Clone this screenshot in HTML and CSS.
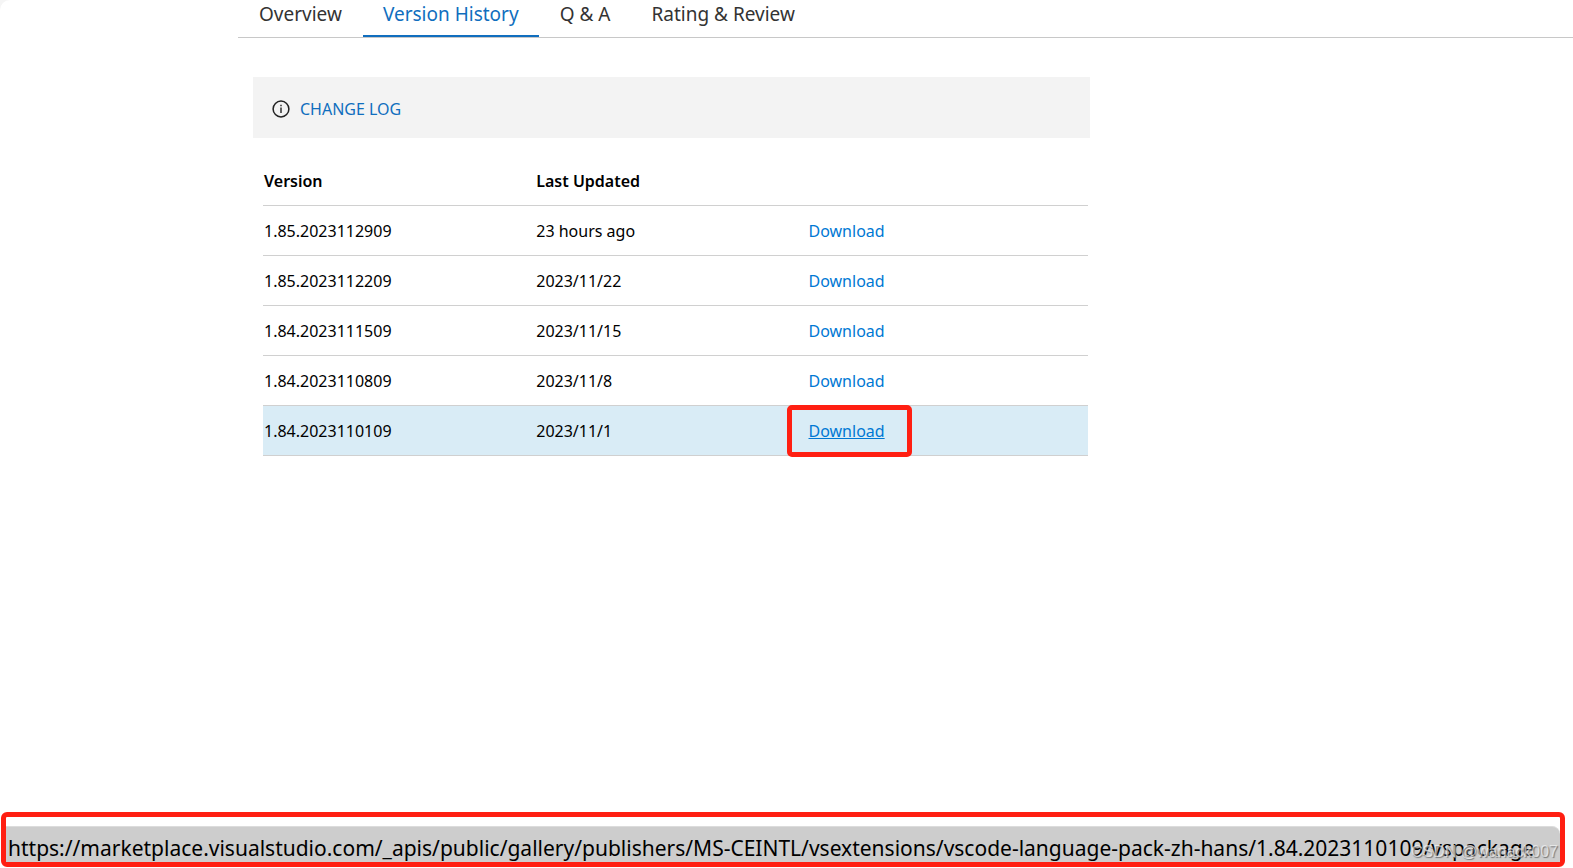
FILE: index.html
```html
<!DOCTYPE html>
<html lang="en">
<head>
<meta charset="utf-8">
<title>Version History</title>
<link rel="stylesheet" href="styles.css">
</head>
<body>
<div class="page">
  <nav class="tabs">
    <a class="tab" href="#overview">Overview</a>
    <a class="tab tab-active" href="#versions">Version History</a>
    <a class="tab" href="#qna">Q &amp; A</a>
    <a class="tab" href="#reviews">Rating &amp; Review</a>
  </nav>
  <main class="content">
    <div class="notice">
      <svg class="info" viewBox="0 0 18 18" aria-hidden="true"><circle cx="9" cy="9" r="7.9" fill="none" stroke="#222" stroke-width="1.5"/><path d="M9 7.5V13M9 4.8V6.2" stroke="#222" stroke-width="1.4"/></svg>
      <a class="link" href="#changelog">CHANGE LOG</a>
    </div>
    <table class="versions">
      <thead><tr><th>Version</th><th>Last Updated</th><th></th></tr></thead>
      <tbody>
        <tr><td>1.85.2023112909</td><td>23 hours ago</td><td><a class="download" href="#d1">Download</a></td></tr>
        <tr><td>1.85.2023112209</td><td>2023/11/22</td><td><a class="download" href="#d2">Download</a></td></tr>
        <tr><td>1.84.2023111509</td><td>2023/11/15</td><td><a class="download" href="#d3">Download</a></td></tr>
        <tr><td>1.84.2023110809</td><td>2023/11/8</td><td><a class="download" href="#d4">Download</a></td></tr>
        <tr class="current"><td>1.84.2023110109</td><td>2023/11/1</td><td><a class="download marked" href="#d5">Download</a></td></tr>
      </tbody>
    </table>
  </main>
  <footer class="status">
    <div class="status-url">https://marketplace.visualstudio.com/_apis/public/gallery/publishers/MS-CEINTL/vsextensions/vscode-language-pack-zh-hans/1.84.2023110109/vspackage</div>
    <span class="watermark">CSDN @wanack007</span>
  </footer>
</div>
</body>
</html>
```
FILE: styles.css
```css
* { box-sizing: border-box; }
body {
  margin: 0;
  background: #fff;
  color: #000;
  font-family: "Noto Sans", "Open Sans", sans-serif;
  font-size: 16px;
  line-height: 24px;
}
.page {
  display: flex;
  flex-direction: column;
  min-height: 100vh;
  border-top-left-radius: 10px;
  box-shadow: 0 0 0 8px #f5f5f5;
  overflow: hidden;
}
a { color: #106ebe; text-decoration: none; }
.tabs {
  display: flex;
  gap: 1px;
  height: 38px;
  margin-left: 238px;
  padding-left: 1px;
  border-bottom: 1px solid #c8c8c8;
  font-size: 19px;
  line-height: 28px;
}
.tab { padding: 0 20px; color: #333; white-space: nowrap; }
.tab-active { color: #106ebe; border-bottom: 2px solid #106ebe; }
.content {
  flex: 1;
  max-width: 1090px;
  padding: 39px 0 0 253px;
}
.notice {
  display: flex;
  align-items: center;
  gap: 10px;
  height: 61px;
  padding: 3px 19px 0;
  background: #f3f3f3;
}
.info { width: 18px; height: 18px; }
.versions {
  width: calc(100% - 12px);
  margin: 17px 2px 0 10px;
  table-layout: fixed;
  border-collapse: collapse;
}
.versions th, .versions td {
  height: 50px;
  padding: 2px 1px 0;
  border-bottom: 1px solid #d0d0d0;
  text-align: left;
}
.versions th { width: 33%; font-weight: 600; }
.versions th:last-child { width: 34%; }
.current { background: #d9ecf6; }
.download { color: #0078d4; }
.marked { position: relative; text-decoration: underline; }
.marked::after {
  content: "";
  position: absolute;
  inset: -15px -27px -15px -22px;
  border: 5px solid #ff1f12;
  border-radius: 5px;
}
.status {
  position: relative;
  margin: 0 8px 1px 1px;
  padding-top: 9px;
  border: 5px solid #ff1f12;
  border-radius: 6px;
}
.status-url {
  height: 36px;
  padding: 0 2px;
  overflow: hidden;
  background: #cdcdcd;
  border-top: 1px solid #dcdcdc;
  border-top-right-radius: 8px;
  font-size: 21px;
  line-height: 42px;
  white-space: nowrap;
}
.watermark {
  position: absolute;
  right: 2px;
  bottom: -2px;
  color: rgba(255, 255, 255, 0.6);
  font-family: "Liberation Sans", Arial, sans-serif;
  font-size: 16px;
  text-shadow: 1px 1px 1px #777;
}
```
